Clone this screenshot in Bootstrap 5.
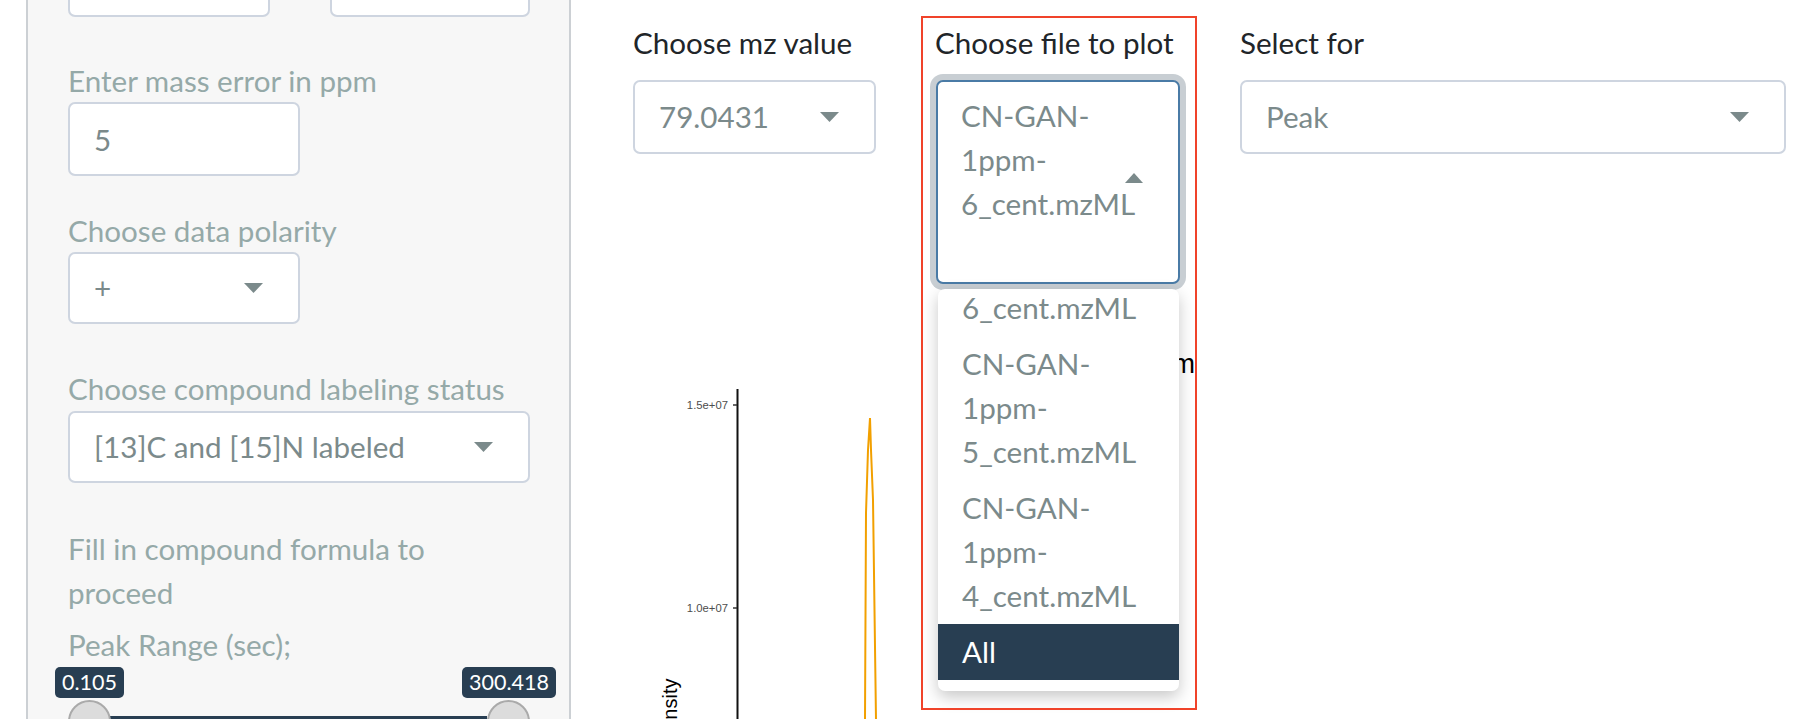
<!DOCTYPE html>
<html lang="en">
<head>
  <meta charset="UTF-8">
  <title>Peak plot</title>
  <link href="https://cdn.jsdelivr.net/npm/bootstrap@5.3.0/dist/css/bootstrap.min.css" rel="stylesheet">
  <style>
    html, body { height: 719px; overflow: hidden; }
    body { font-family: Lato, "Liberation Sans", sans-serif; font-size: 29.6px; line-height: 44px; color: #212529; background: #fff; }
    .side-panel { margin-left: 26px; width: 545px; height: 719px; padding: 0 39px 0 40px; background: #f7f7f7; border: solid #ccd0d4; border-width: 0 2px; color: #95a9a8; flex: none; overflow: hidden; }
    .main-area { margin-left: 62px; width: 1153px; flex: none; position: relative; }
    .top-inputs { margin-top: -57px; margin-bottom: 42px; }
    .top-inputs .form-control { width: 202px; }
    .top-inputs .form-control:last-child { width: 200px; }
    .field-label { line-height: 44px; margin: 0; display: block; }
    .form-control, .form-select { font-size: 29.6px; color: #7b8a8b; border: 2px solid #ced5e0; border-radius: 7px; line-height: 44px; padding: 12px 24px; box-shadow: none; }
    .form-select { background-image: url("data:image/svg+xml,%3Csvg xmlns='http://www.w3.org/2000/svg' viewBox='0 0 19 10'%3E%3Cpath fill='%237b8a8b' d='M0 0h19l-9.5 10z'/%3E%3C/svg%3E"); background-size: 19px 10px; background-position: right 35px center; padding-right: 60px; }
    .field-short { width: 232px; }
    .h-mass { height: 74px; margin-bottom: 33px; }
    .h-polar { height: 72px; margin-bottom: 43px; }
    .nudge-up { margin-top: -1px; }
    .h-label { width: 462px; height: 72px; margin-bottom: 44px; }
    .peak-label { margin-top: 8px; }
    .range-box { position: relative; height: 52px; }
    .range-tip { position: absolute; top: 0; height: 31px; background: #283e52; color: #fff; font-size: 21.5px; line-height: 31px; border-radius: 5px; padding: 0 7px; }
    .range-tip-a { left: -13px; }
    .range-tip-b { left: 394px; }
    .range-bar { position: absolute; top: 49px; left: 41px; width: 378px; height: 10px; background: #283e52; }
    .range-knob { position: absolute; top: 33px; width: 43px; height: 43px; border-radius: 50%; background: #dcdcdc; border: 2px solid #aaa; }
    .knob-a { left: 0; }
    .knob-b { left: 419px; }
    .pick-row { padding-top: 21px; }
    .pick-a { width: 243px; margin-right: 59px; }
    .pick-b { width: 246px; margin-right: 59px; position: relative; z-index: 2; }
    .pick-c { width: 546px; }
    .pick-row .field-label { margin-bottom: 15px; }
    .pick-row .form-select { height: 74px; }
    .open-select { position: relative; height: 204px; margin: 0 1px; padding: 12px 40px 0 23px; border: 2px solid #4a7ba6; border-radius: 7px; background: #fff; color: #7b8a8b; box-shadow: 0 0 0 6px #c8ced3; }
    .caret-up { position: absolute; right: 35px; top: 91px; width: 0; height: 0; border-left: 9.5px solid transparent; border-right: 9.5px solid transparent; border-bottom: 10px solid #7b8a8b; }
    .file-menu { position: absolute; top: 268px; left: 3px; width: 241px; height: 402px; overflow: hidden; background: #fff; border-radius: 7px; box-shadow: 0 6px 16px rgba(0,0,0,.22); padding-bottom: 11px; color: #7b8a8b; }
    .file-item { padding: 6px 24px; flex: none; }
    .file-item.is-on { background: #283e52; color: #fff; }
    .red-note { position: absolute; top: -5px; left: -14px; width: 276px; height: 694px; border: 2px solid #f0432a; pointer-events: none; }
    .plot-svg { display: block; margin-top: 66px; }
    .plot-svg text { font-family: "Liberation Sans", Arial, sans-serif; }
  </style>
</head>
<body>
<div class="d-flex">
  <div class="side-panel">
    <div class="top-inputs d-flex justify-content-between">
      <input class="form-control h-mass mb-0" type="text">
      <input class="form-control h-mass mb-0" type="text">
    </div>
    <label class="field-label">Enter mass error in ppm</label>
    <input class="form-control field-short h-mass nudge-up" type="text" value="5">
    <label class="field-label">Choose data polarity</label>
    <select class="form-select field-short h-polar nudge-up"><option>+</option></select>
    <label class="field-label">Choose compound labeling status</label>
    <select class="form-select h-label"><option>[13]C and [15]N labeled</option></select>
    <div>Fill in compound formula to proceed</div>
    <label class="field-label peak-label">Peak Range (sec);</label>
    <div class="range-box">
      <span class="range-tip range-tip-a">0.105</span>
      <span class="range-tip range-tip-b">300.418</span>
      <div class="range-bar"></div>
      <div class="range-knob knob-a"></div>
      <div class="range-knob knob-b"></div>
    </div>
  </div>

  <div class="main-area">
    <div class="pick-row d-flex">
      <div class="pick-a">
        <label class="field-label">Choose mz value</label>
        <select class="form-select"><option>79.0431</option></select>
      </div>
      <div class="pick-b">
        <label class="field-label">Choose file to plot</label>
        <div class="open-select">CN-GAN-1ppm-6_cent.mzML<span class="caret-up"></span></div>
        <div class="file-menu d-flex flex-column justify-content-end">
          <div class="file-item">6_cent.mzML</div>
          <div class="file-item">CN-GAN-1ppm-5_cent.mzML</div>
          <div class="file-item">CN-GAN-1ppm-4_cent.mzML</div>
          <div class="file-item is-on">All</div>
        </div>
        <div class="red-note"></div>
      </div>
      <div class="pick-c">
        <label class="field-label">Select for</label>
        <select class="form-select"><option>Peak</option></select>
      </div>
    </div>

    <svg class="plot-svg" width="570" height="369" viewBox="0 0 570 369">
      <text x="562" y="23" font-size="27" text-anchor="end" fill="#000">m</text>
      <line x1="104.500" y1="39" x2="104.500" y2="369" stroke="#111" stroke-width="2"/>
      <line x1="100" y1="55" x2="104" y2="55" stroke="#333" stroke-width="1.500"/>
      <line x1="100" y1="258" x2="104" y2="258" stroke="#333" stroke-width="1.500"/>
      <text x="95" y="59" font-size="11.300" text-anchor="end" fill="#4d4d4d">1.5e+07</text>
      <text x="95" y="262" font-size="11.300" text-anchor="end" fill="#4d4d4d">1.0e+07</text>
      <text transform="translate(44 403) rotate(-90)" font-size="20" fill="#000">Intensity</text>
      <path d="M232 369L233 163L235 100L237 68L238 100L240 150L243 369" fill="none" stroke="#f2a000" stroke-width="2"/>
    </svg>
  </div>
</div>
<script src="https://cdn.jsdelivr.net/npm/bootstrap@5.3.0/dist/js/bootstrap.bundle.min.js"></script>
</body>
</html>
